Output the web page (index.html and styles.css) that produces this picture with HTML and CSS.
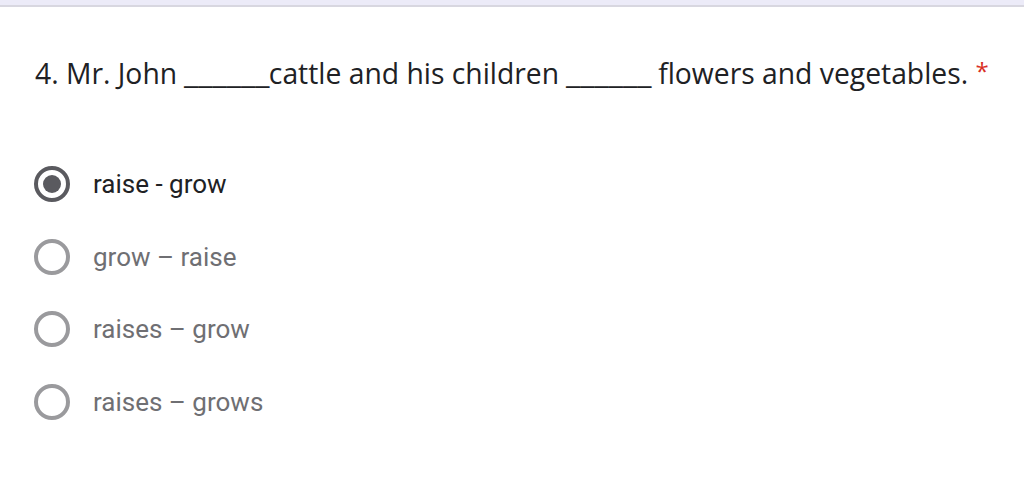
FILE: index.html
```html
<!DOCTYPE html>
<html lang="en">
<head>
    <meta charset="UTF-8">
    <title>Question 4</title>
    <link rel="stylesheet" href="styles.css">
</head>
<body>
    <div class="top-edge"></div>

    <div class="question">
        <div class="title">4. Mr. John <span class="blank">______</span>cattle and his children <span class="blank">______</span> flowers and vegetables. <span class="required">*</span></div>

        <div class="options">
            <label class="option selected">
                <span class="radio"></span>
                <span class="label">raise - grow</span>
            </label>
            <label class="option">
                <span class="radio"></span>
                <span class="label">grow – raise</span>
            </label>
            <label class="option">
                <span class="radio"></span>
                <span class="label">raises – grow</span>
            </label>
            <label class="option">
                <span class="radio"></span>
                <span class="label">raises – grows</span>
            </label>
        </div>
    </div>
</body>
</html>
```

FILE: styles.css
```css
body {
    margin: 0;
    background: #ffffff;
    font-family: Roboto, "Liberation Sans", sans-serif;
}
.top-edge {
    height: 5px;
    background: #ecebf8;
    border-bottom: 2px solid #d8d7e0;
}
.question {
    padding: 46px 34px 0 35px;
}
.title {
    font-family: "Open Sans", "Liberation Sans", sans-serif;
    font-size: 28.3px;
    color: #202124;
    line-height: 36px;
}
.blank {
    display: inline-block;
    transform: scaleX(1.15);
    transform-origin: left;
    margin-right: 10px;
}
.required {
    color: #d93025;
    font-size: 24px;
    vertical-align: 4px;
}
.options {
    margin-top: 75px;
    display: flex;
    flex-direction: column;
    gap: 36.7px;
}
.option {
    display: flex;
    align-items: center;
    height: 36px;
}
.radio {
    width: 36px;
    height: 36px;
    box-sizing: border-box;
    border: 4px solid #9a9a9d;
    border-radius: 50%;
    display: flex;
    align-items: center;
    justify-content: center;
    margin-left: -1px;
}
.option.selected .radio {
    border-color: #5a5a5f;
}
.option.selected .radio::after {
    content: "";
    width: 18px;
    height: 18px;
    border-radius: 50%;
    background: #5a5a5f;
}
.label {
    margin-left: 23px;
    font-size: 26px;
    color: #6f6f73;
}
.option.selected .label {
    color: #202124;
}
```
